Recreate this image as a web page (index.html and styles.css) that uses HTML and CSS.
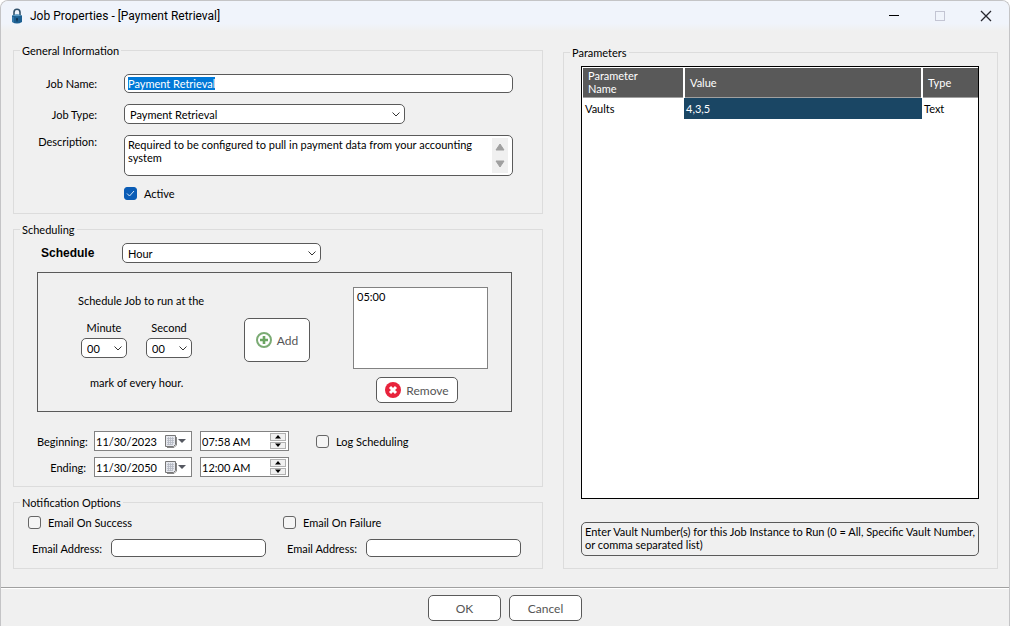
FILE: index.html
```html
<!DOCTYPE html>
<html lang="en">
<head>
	<meta charset="UTF-8">
	<meta name="viewport" content="width=device-width, initial-scale=1.0">
	<title>Job Properties - [Payment Retrieval]</title>
	<link rel="stylesheet" href="styles.css">
</head>
<body>
	<div class="window">
		<header class="title-bar">
			<svg class="icon-lock" width="12" height="16" viewBox="0 0 12 16">
				<path d="M3 8V4.200a3 3 0 0 1 6 0V8" fill="none" stroke="#31526b" stroke-width="1.600"/>
				<path d="M1 7.500q5-2 10 0v6.500q-5 3-10 0z" fill="#1c5f91"/>
				<path d="M1 7.500q5-2 10 0q-5 1.500-10 0z" fill="#5b9bc4"/>
				<path d="M2 9v5" stroke="#4c8fbd"/>
				<circle cx="6" cy="11" r="1" fill="#0d2f4c"/>
				<path d="M6 11v2.500" stroke="#0d2f4c"/>
			</svg>
			<h1 class="title">Job Properties - [Payment Retrieval]</h1>
			<div class="window-buttons">
				<button class="btn-window" aria-label="Minimize">
					<svg width="12" height="12" viewBox="0 0 12 12"><path d="M1 5.500h10" stroke="#000"/></svg>
				</button>
				<button class="btn-window" aria-label="Maximize" disabled>
					<svg width="12" height="12" viewBox="0 0 12 12"><rect x="1.500" y="1.500" width="9" height="9" fill="none" stroke="#c3c5d3"/></svg>
				</button>
				<button class="btn-window" aria-label="Close">
					<svg width="12" height="12" viewBox="0 0 12 12"><path d="M1 1l10 10M11 1L1 11" stroke="#26262e" stroke-width="1.300"/></svg>
				</button>
			</div>
		</header>

		<main class="content">
			<div class="column">
				<fieldset class="group">
					<legend>General Information</legend>
					<div class="general">
						<label for="jobName">Job Name:</label>
						<input type="text" class="field" id="jobName" value="Payment Retrieval" spellcheck="false">
						<label for="jobType">Job Type:</label>
						<select class="combo combo-type" id="jobType">
							<option>Payment Retrieval</option>
						</select>
						<label class="label-top" for="description">Description:</label>
						<div class="memo">
							<textarea id="description" spellcheck="false">Required to be configured to pull in payment data from your accounting system</textarea>
							<div class="memo-scroll">
								<button aria-label="Scroll up"><svg width="10" height="8" viewBox="0 0 10 8"><path d="M5 1l4 6H1z" fill="#a0a0a0" stroke="#a0a0a0" stroke-linejoin="round"/></svg></button>
								<button aria-label="Scroll down"><svg width="10" height="8" viewBox="0 0 10 8"><path d="M5 7l4-6H1z" fill="#a0a0a0" stroke="#a0a0a0" stroke-linejoin="round"/></svg></button>
							</div>
						</div>
						<label class="check active"><input type="checkbox" checked>Active</label>
					</div>
				</fieldset>

				<fieldset class="group">
					<legend>Scheduling</legend>
					<div class="scheduling">
						<div class="schedule-row">
							<label class="schedule-label" for="schedule">Schedule</label>
							<select class="combo combo-schedule" id="schedule">
								<option>Hour</option>
							</select>
						</div>
						<div class="panel">
							<div class="run-at">
								<p>Schedule Job to run at the</p>
								<div class="run-time">
									<div class="time-part">
										<label for="minute">Minute</label>
										<select class="combo combo-small" id="minute"><option>00</option></select>
									</div>
									<div class="time-part">
										<label for="second">Second</label>
										<select class="combo combo-small" id="second"><option>00</option></select>
									</div>
								</div>
								<p class="run-end">mark of every hour.</p>
							</div>
							<button class="btn btn-add">
								<svg width="16" height="16" viewBox="0 0 16 16">
									<circle cx="8" cy="8" r="7" fill="#fff" stroke="#7bab74" stroke-width="2"/>
									<path d="M8 4v8M4 8h8" stroke="#6ba562" stroke-width="2.600"/>
								</svg>
								Add
							</button>
							<div class="times">
								<select class="times-list" size="5" aria-label="Scheduled times">
									<option>05:00</option>
								</select>
								<button class="btn btn-remove">
									<svg width="16" height="16" viewBox="0 0 16 16">
										<circle cx="8" cy="8" r="8" fill="#e8233c"/>
										<path d="M5 5l6 6M11 5l-6 6" stroke="#fff" stroke-width="3"/>
									</svg>
									Remove
								</button>
							</div>
						</div>
						<div class="period">
							<label for="beginDate">Beginning:</label>
							<div class="picker">
								<input type="text" id="beginDate" value="11/30/2023">
								<button class="btn-calendar" aria-label="Pick beginning date">
									<svg width="22" height="13" viewBox="0 0 22 13">
										<path d="M.5.500h10v9l-2 2h-8z" fill="#e6e8ee" stroke="#777"/>
										<path d="M2 3.500h7M2 5.500h7M2 7.500h7M2 9.500h5M3.500 2v8M5.500 2v8M7.500 2v8" stroke="#b4b8c2" stroke-width=".8"/>
										<path d="M11.500 2v8l-2.500 2.500H2" fill="none" stroke="#888"/>
										<path d="M13 4h8l-4 4z" fill="#555861"/>
									</svg>
								</button>
							</div>
							<div class="picker">
								<input type="text" value="07:58 AM" aria-label="Beginning time">
								<div class="spin">
									<button aria-label="Later"><svg width="6" height="4" viewBox="0 0 6 4"><path d="M3 0l3 3.500H0z"/></svg></button>
									<button aria-label="Earlier"><svg width="6" height="4" viewBox="0 0 6 4"><path d="M3 4l3-3.500H0z"/></svg></button>
								</div>
							</div>
							<label class="check log"><input type="checkbox">Log Scheduling</label>
							<label for="endDate">Ending:</label>
							<div class="picker">
								<input type="text" id="endDate" value="11/30/2050">
								<button class="btn-calendar" aria-label="Pick ending date">
									<svg width="22" height="13" viewBox="0 0 22 13">
										<path d="M.5.500h10v9l-2 2h-8z" fill="#e6e8ee" stroke="#777"/>
										<path d="M2 3.500h7M2 5.500h7M2 7.500h7M2 9.500h5M3.500 2v8M5.500 2v8M7.500 2v8" stroke="#b4b8c2" stroke-width=".8"/>
										<path d="M11.500 2v8l-2.500 2.500H2" fill="none" stroke="#888"/>
										<path d="M13 4h8l-4 4z" fill="#555861"/>
									</svg>
								</button>
							</div>
							<div class="picker">
								<input type="text" value="12:00 AM" aria-label="Ending time">
								<div class="spin">
									<button aria-label="Later"><svg width="6" height="4" viewBox="0 0 6 4"><path d="M3 0l3 3.500H0z"/></svg></button>
									<button aria-label="Earlier"><svg width="6" height="4" viewBox="0 0 6 4"><path d="M3 4l3-3.500H0z"/></svg></button>
								</div>
							</div>
						</div>
					</div>
				</fieldset>

				<fieldset class="group">
					<legend>Notification Options</legend>
					<div class="notification">
						<div class="notify">
							<label class="check"><input type="checkbox">Email On Success</label>
							<div class="email">
								<label for="successEmail">Email Address:</label>
								<input type="text" class="field" id="successEmail">
							</div>
						</div>
						<div class="notify">
							<label class="check"><input type="checkbox">Email On Failure</label>
							<div class="email">
								<label for="failureEmail">Email Address:</label>
								<input type="text" class="field" id="failureEmail">
							</div>
						</div>
					</div>
				</fieldset>
			</div>

			<fieldset class="group group-parameters">
				<legend>Parameters</legend>
				<div class="parameters">
					<div class="grid-box">
						<table class="grid">
							<thead>
								<tr>
									<th class="col-name">Parameter<br>Name</th>
									<th>Value</th>
									<th class="col-type">Type</th>
								</tr>
							</thead>
							<tbody>
								<tr>
									<td>Vaults</td>
									<td class="selected">4,3,5</td>
									<td>Text</td>
								</tr>
							</tbody>
						</table>
					</div>
					<p class="hint">Enter Vault Number(s) for this Job Instance to Run (0 = All, Specific Vault Number, or comma separated list)</p>
				</div>
			</fieldset>
		</main>

		<footer class="footer">
			<button class="btn btn-dialog">OK</button>
			<button class="btn btn-dialog">Cancel</button>
		</footer>
	</div>

	<script>
		//the job name is selected when the dialog opens
		const jobName = document.querySelector('#jobName');
		jobName.focus();
		jobName.select();
	</script>
</body>
</html>
```
FILE: styles.css
```css
*{box-sizing: border-box;}
body{margin: 0; background-color: #fff;}
body, button, input, select, textarea{
	font-family: Lato, "Liberation Sans", sans-serif; font-size: 11px; line-height: 13px; color: #000;
}
p{margin: 0;}
button{padding: 0; border: none; background: none;}
svg{display: block; flex: none;}
input:focus{outline: none;}
::selection{background-color: #0078d7; color: #fff;}

.window{
	min-height: 100vh; display: flex; flex-direction: column;
	background-color: #f0f0f0; border: 1px solid #c4c4c6; border-bottom: none;
	border-radius: 8px 8px 0 0; overflow: hidden;
}

/* title bar */
.title-bar{
	display: flex; align-items: center; height: 30px; padding-left: 10px;
	background: linear-gradient(#f0f4fb 75%, #f0f0f0);
}
.title{
	margin: 0 0 0 7px; font-family: Roboto, sans-serif; font-size: 12px; font-weight: normal; line-height: 16px;
}
.window-buttons{display: flex; margin-left: auto;}
.btn-window{
	width: 46px; height: 28px; display: flex; align-items: center; justify-content: center;
}

/* layout */
.content{
	flex: 1; display: grid; grid-template-columns: 530fr 435fr; gap: 20px;
	padding: 13px 11px 18px 12px;
}
.column{display: flex; flex-direction: column; gap: 9px;}
.group{margin: 0; padding: 0; border: 1px solid #dcdcdc; min-width: 0;}
.group legend{margin-left: 6px; padding: 0 2px;}

/* controls */
.field{
	width: 100%; height: 18px; padding: 0 3px; border: 1px solid #5a5a5a; border-radius: 5px;
	background-color: #fff;
}
.combo{
	appearance: none; height: 20px; padding: 0 5px; border: 1px solid #5a5a5a; border-radius: 5px;
	background: #fff url("data:image/svg+xml,%3Csvg xmlns='http://www.w3.org/2000/svg' width='8' height='5'%3E%3Cpath d='M.5.5L4 4L7.500.5' fill='none' stroke='%23333'/%3E%3C/svg%3E") no-repeat right 4px center;
}
.check{display: flex; align-items: center; gap: 7px;}
.check input{
	appearance: none; width: 13px; height: 13px; margin: 0; border: 1px solid #666;
	border-radius: 3px; background-color: #f5f5f5;
}
.check input:checked{
	border-color: #0a5cb5;
	background: #0a5cb5 url("data:image/svg+xml,%3Csvg xmlns='http://www.w3.org/2000/svg' width='9' height='7'%3E%3Cpath d='M1 3.500L3.500 6L8 1' fill='none' stroke='%23d5e6f7'/%3E%3C/svg%3E") no-repeat center;
}
.btn{
	display: flex; align-items: center; justify-content: center; gap: 5px;
	border: 1px solid #5a5a5a; border-radius: 5px; background-color: #fff;
	font-size: 12px; color: #555;
}

/* general information */
.general{
	display: grid; grid-template-columns: 83px 1fr; column-gap: 27px; row-gap: 11px;
	align-items: center; padding: 17px 29px 13px 0;
}
.general > label{text-align: right;}
.general .field{height: 19px;}
.general .label-top{align-self: start;}
.combo-type{width: 281px;}
.memo{
	display: flex; height: 41px; padding: 2px 4px 2px 0; border: 1px solid #5a5a5a;
	border-radius: 5px; background-color: #fff;
}
.memo textarea{
	flex: 1; padding: 0 3px; border: none; resize: none; overflow: hidden; background: none; outline: none;
}
.memo-scroll{
	width: 16px; display: flex; flex-direction: column; align-items: center;
	justify-content: space-around; background-color: #f0f0f0;
}
.general .active{grid-column: 2; text-align: left;}

/* scheduling */
.scheduling{padding: 7px 30px 9px 23px;}
.schedule-row{display: flex; align-items: center; margin-left: 4px;}
.schedule-label{width: 81px; font-family: "Liberation Sans", Arial, sans-serif; font-size: 12px; font-weight: bold;}
.combo-schedule{width: 199px;}
.panel{
	display: flex; align-items: flex-start; height: 140px; margin-top: 9px;
	padding: 14px 23px 0 40px; border: 1px solid #5a5a5a;
}
.run-at{width: 166px; padding-top: 7px;}
.run-time{display: flex; gap: 19px; margin: 14px 0 18px 3px;}
.time-part{display: flex; flex-direction: column; align-items: center; gap: 4px;}
.combo-small{width: 46px;}
.run-end{margin-left: 12px;}
.btn-add{width: 66px; height: 44px; margin-top: 31px;}
.times{width: 135px; margin-left: auto;}
.times-list{
	display: block; width: 100%; height: 82px; padding: 0; border: 1px solid #828282; border-radius: 0;
	background-color: #fff; overflow: hidden;
}
.times-list option{padding: 2px 3px; min-height: 0;}
.btn-remove{width: 82px; height: 26px; margin: 8px 0 0 23px;}
.period{
	display: grid; grid-template-columns: 49px 98px 89px auto; justify-content: start; align-items: center;
	column-gap: 8px; row-gap: 6px; margin-top: 19px;
}
.period > label{text-align: right;}
.period .log{margin-left: 19px;}
.picker{
	display: flex; align-items: center; height: 20px; border: 1px solid #828282; background-color: #fff;
}
.picker input{flex: 1; min-width: 0; padding: 0 1px; border: none; background: none;}
.btn-calendar{margin-right: 4px;}
.spin{
	width: 16px; height: 16px; margin-right: 2px; display: flex; flex-direction: column; gap: 1px;
}
.spin button{
	flex: 1; display: flex; align-items: center; justify-content: center;
	border: 1px solid #b0b0b0; background-color: #f0f0f0;
}

/* notification options */
.notification{display: grid; grid-template-columns: 1fr 1fr; padding: 7px 4px 11px 14px;}
.notify{display: flex; flex-direction: column; gap: 10px;}
.email{display: flex; align-items: center; padding: 0 17px 0 4px;}
.email label{width: 79px; white-space: nowrap;}
.email .field{flex: 1; min-width: 0;}

/* parameters */
.group-parameters{display: flex; flex-direction: column; margin-top: 2px;}
.parameters{
	flex: 1; display: flex; flex-direction: column; gap: 23px; padding: 7px 18px 12px 17px;
}
.grid-box{flex: 1; padding: 1px 0 0 1px; border: 1px solid #000; background-color: #fff;}
.grid{width: 100%; table-layout: fixed; border-collapse: collapse;}
.grid th{
	height: 29px; padding: 0 5px; background-color: #595959; border-bottom: 1px solid #a0a0a0;
	color: #fff; font-weight: normal; text-align: left;
}
.grid th + th{border-left: 2px solid #fff;}
.grid td{height: 22px; padding: 0 2px;}
.grid .selected{background-color: #1a4664; color: #fff;}
.col-name{width: 101px;}
.col-type{width: 56px;}
.hint{
	height: 34px; padding: 2px 3px; border: 1px solid #5a5a5a; border-radius: 5px;
}

/* footer */
.footer{
	display: flex; justify-content: center; gap: 8px; padding: 7px 0 5px;
	border-top: 1px solid #a0a0a0; box-shadow: inset 0 1px #fff;
}
.btn-dialog{width: 73px; height: 26px;}
```
